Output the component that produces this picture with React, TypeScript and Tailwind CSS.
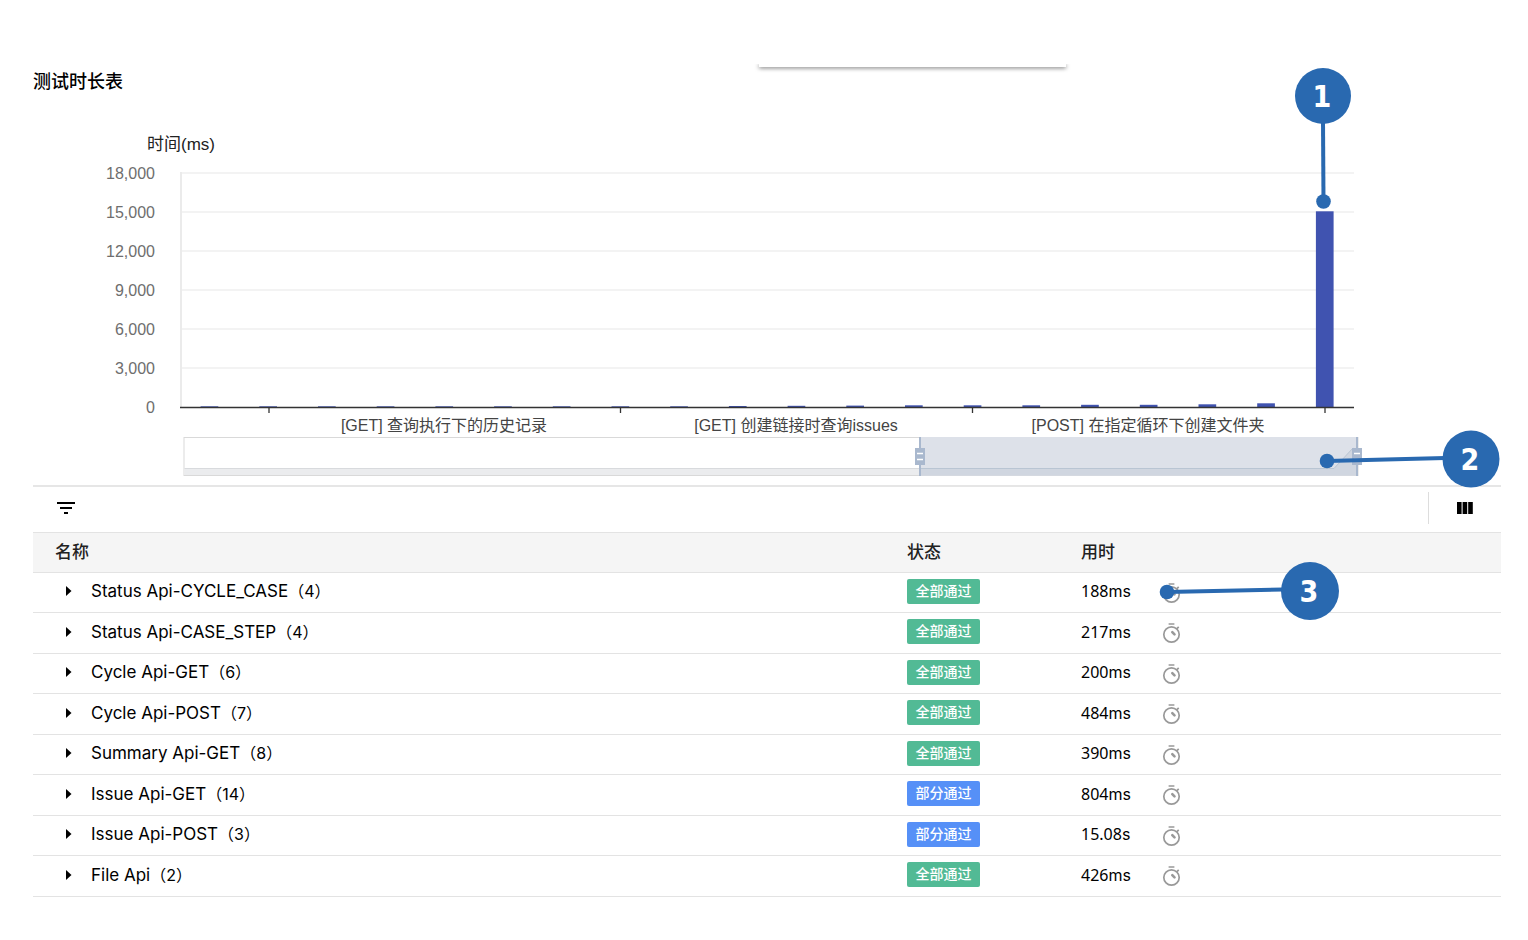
import { MdFilterList } from "react-icons/md";

type Status = "all" | "partial";

interface TestGroup {
  name: string;
  count: number;
  status: Status;
  value: string;
  unit: string;
}

const groups: TestGroup[] = [
  { name: "Status Api-CYCLE_CASE", count: 4, status: "all", value: "188", unit: "ms" },
  { name: "Status Api-CASE_STEP", count: 4, status: "all", value: "217", unit: "ms" },
  { name: "Cycle Api-GET", count: 6, status: "all", value: "200", unit: "ms" },
  { name: "Cycle Api-POST", count: 7, status: "all", value: "484", unit: "ms" },
  { name: "Summary Api-GET", count: 8, status: "all", value: "390", unit: "ms" },
  { name: "Issue Api-GET", count: 14, status: "partial", value: "804", unit: "ms" },
  { name: "Issue Api-POST", count: 3, status: "partial", value: "15.08", unit: "s" },
  { name: "File Api", count: 2, status: "all", value: "426", unit: "ms" },
];

const badge: Record<Status, { text: string; style: string }> = {
  all: { text: "全部通过", style: "bg-[#52ba95]" },
  partial: { text: "部分通过", style: "bg-[#5690f7]" },
};

const yTicks = [
  { label: "18,000", y: 173 },
  { label: "15,000", y: 212 },
  { label: "12,000", y: 251 },
  { label: "9,000", y: 290 },
  { label: "6,000", y: 329 },
  { label: "3,000", y: 368 },
];

const xLabels = [
  { label: "[GET] 查询执行下的历史记录", x: 444 },
  { label: "[GET] 创建链接时查询issues", x: 796 },
  { label: "[POST] 在指定循环下创建文件夹", x: 1148 },
];

const barHeights = [1, 1, 1, 1, 1, 1, 1, 1, 1, 1.3, 1.5, 1.7, 2, 2, 2, 2.5, 2.5, 3, 4, 196];

function Callout({ cx, cy, r, x, y, lineFromX, lineFromY, label }: {
  cx: number; cy: number; r: number; x: number; y: number; lineFromX: number; lineFromY: number; label: string;
}) {
  return (
    <g className="fill-[#2969b0]">
      <line x1={lineFromX} y1={lineFromY} x2={x} y2={y} className="stroke-[#2969b0]" strokeWidth="4" />
      <circle cx={x} cy={y} r="7.3" />
      <circle cx={cx} cy={cy} r={r} />
      <text x={cx - 1} y={cy + 11} textAnchor="middle" className="fill-white font-['DejaVu_Sans_Condensed','DejaVu_Sans',sans-serif] text-[30px] font-bold">
        {label}
      </text>
    </g>
  );
}

function DurationChart() {
  return (
    <svg
      viewBox="33 98 1468 387"
      className="relative z-10 block w-full overflow-visible font-['Liberation_Sans','Noto_Sans_CJK_SC',sans-serif] text-[16px]"
      role="img"
      aria-label="测试时长表"
    >
      <text x="147" y="150" className="fill-[#222] text-[17px]">时间(ms)</text>
      {yTicks.map((t) => (
        <g key={t.label}>
          <text x="155" y={t.y + 5.5} textAnchor="end" className="fill-[#6e6e6e]">{t.label}</text>
          <line x1="181" x2="1354" y1={t.y} y2={t.y} className="stroke-[#f3f3f3]" strokeWidth="2" />
        </g>
      ))}
      <text x="155" y="412.5" textAnchor="end" className="fill-[#6e6e6e]">0</text>
      <line x1="181" x2="181" y1="172" y2="407" className="stroke-[#ebebeb]" strokeWidth="2" />
      {barHeights.map((h, i) => (
        <rect key={i} x={200.6 + i * 58.7} y={407.3 - h} width="17.7" height={h} className="fill-[#4053b0]" />
      ))}
      <line x1="180" x2="1354" y1="407.5" y2="407.5" className="stroke-[#333]" strokeWidth="1.3" />
      {[269, 620.5, 972.5, 1325].map((x) => (
        <line key={x} x1={x} x2={x} y1="408" y2="413" className="stroke-[#333]" strokeWidth="1.3" />
      ))}
      {xLabels.map((l) => (
        <text key={l.label} x={l.x} y="431" textAnchor="middle" className="fill-[#444]">{l.label}</text>
      ))}

      <rect x="184" y="437.5" width="1174" height="38" className="fill-white stroke-[#d9d9d9]" />
      <path d="M184.5 475V469H1334L1353 448L1358 452V475Z" className="fill-[#ebecee]" />
      <path d="M184.5 468.5H1334L1353 448L1358 452" className="fill-none stroke-[#d8dadd]" />
      <rect x="920" y="437" width="438" height="38.5" className="fill-[#dde1e9]" />
      <path d="M920 475.5V468.5H1334L1353 448L1358 452V475.5Z" className="fill-[#d0d6e0]" />
      <path d="M920 468.5H1334L1353 448L1358 452" className="fill-none stroke-[#b9c5d3]" />
      {[920, 1357].map((x) => (
        <g key={x}>
          <line x1={x} x2={x} y1="437" y2="476" className="stroke-[#a9b8ce]" strokeWidth="2" />
          <rect x={x - 5} y="448" width="10" height="17" className="fill-[#a9b8ce]" />
          <path d={`M${x - 3} 453.5h6M${x - 3} 459.5h6`} className="stroke-white" strokeWidth="1.3" />
        </g>
      ))}
      <Callout cx={1323} cy={96} r={28} lineFromX={1323} lineFromY={122} x={1323.5} y={201.5} label="1" />
      <Callout cx={1471} cy={459} r={28.5} lineFromX={1445} lineFromY={458} x={1327} y={461} label="2" />
    </svg>
  );
}

function TimerIcon() {
  return (
    <svg viewBox="0 0 20 22" className="h-[22px] w-5 fill-none stroke-[#999]" strokeWidth="1.7" aria-hidden="true">
      <circle cx="10.5" cy="12.5" r="7.7" />
      <path d="M7.6 2h5.8M15.7 6.8l2-2" />
      <path d="M11.3 10.2l2.2 2.2" strokeWidth="2.6" strokeLinecap="round" />
    </svg>
  );
}

export default function App() {
  return (
    <main className="min-h-screen bg-white pt-16 pr-[27px] pb-11 pl-[33px] font-['Inter','Noto_Sans_CJK_SC',sans-serif] text-black">
      <section className="relative">
        <div className="pointer-events-none absolute inset-x-0 top-0 h-4 overflow-hidden">
          <div className="mx-auto h-[3px] w-[307px] translate-x-[145px] bg-white shadow-[0_1px_4px_rgba(0,0,0,0.6)]" />
        </div>
        <h2 className="relative h-[34px] text-[18px] leading-9 font-medium">测试时长表</h2>
        <DurationChart />
      </section>

      <div className="flex h-[47px] items-start justify-between border-t-2 border-[#e6e6e6] pt-[5px] pl-[21px]">
        <button type="button" aria-label="筛选" className="flex h-8 items-center">
          <MdFilterList className="size-6" />
        </button>
        <div className="flex h-8 w-[73px] items-center justify-center border-l border-[#ddd]">
          <button type="button" aria-label="列设置">
            <svg viewBox="0 0 16 12" className="h-3 w-4" aria-hidden="true">
              <path d="M0 0h4.6v12H0zM5.6 0h4.6v12H5.6zM11.2 0h4.6v12h-4.6z" />
            </svg>
          </button>
        </div>
      </div>

      <table className="w-full table-fixed border-collapse text-left text-[16px]">
        <colgroup>
          <col />
          <col className="w-[174px]" />
          <col className="w-[442px]" />
        </colgroup>
        <thead>
          <tr className="h-10 border-y border-[#e3e3e3] bg-[#f5f5f5] text-[17px] text-[#222]">
            <th className="pl-[22px] font-medium">名称</th>
            <th className="pl-[22px] font-medium">状态</th>
            <th className="pl-[22px] font-medium">用时</th>
          </tr>
        </thead>
        <tbody>
          {groups.map((g, i) => (
            <tr key={g.name} className="border-b border-[#e3e3e3] odd:h-10 even:h-[41px]">
              <td className="pb-[3px] pl-8">
                <button type="button" className="flex items-center gap-[19px] leading-6">
                  <svg viewBox="0 0 7 12" className="h-3 w-[7px]" aria-hidden="true">
                    <path d="M1 1l5.5 5L1 11z" />
                  </svg>
                  <span>
                    <span className="text-[17px]">{g.name}</span>（{g.count}）
                  </span>
                </button>
              </td>
              <td className="pb-[3px] pl-[22px]">
                <span className={`block h-[25px] w-[73px] rounded-[2px] text-center text-[14px] leading-6 font-medium text-white ${badge[g.status].style}`}>
                  {badge[g.status].text}
                </span>
              </td>
              <td className="pb-[3px] pl-[22px]">
                <div className="relative flex items-center">
                  <span className="w-20 leading-6">
                    <span className="font-['Noto_Sans',sans-serif]">{g.value}</span>
                    {g.unit}
                  </span>
                  <button type="button" aria-label="查看用时" className="pt-[3px]">
                    <TimerIcon />
                  </button>
                  {i === 0 && (
                    <svg viewBox="0 0 190 58" className="absolute -top-4 left-[72px] z-10 h-[58px] w-[190px] overflow-visible">
                      <Callout cx={157} cy={28} r={29} lineFromX={130} lineFromY={26.5} x={14} y={29} label="3" />
                    </svg>
                  )}
                </div>
              </td>
            </tr>
          ))}
        </tbody>
      </table>
    </main>
  );
}
